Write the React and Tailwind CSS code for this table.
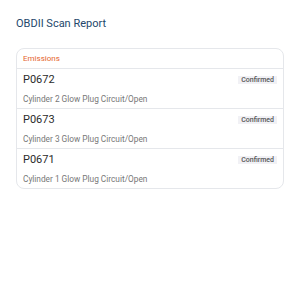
import React from 'react';

const codes = [
  { code: 'P0672', desc: 'Cylinder 2 Glow Plug Circuit/Open' },
  { code: 'P0673', desc: 'Cylinder 3 Glow Plug Circuit/Open' },
  { code: 'P0671', desc: 'Cylinder 1 Glow Plug Circuit/Open' },
];

const App = () => {
  return (
    <div className="w-[300px] h-[300px] bg-white px-4 pt-4" style={{ fontFamily: 'Roboto, sans-serif' }}>
      <h1 className="text-[11px] leading-[16px] text-[#24476b]">OBDII Scan Report</h1>

      <div className="mt-4 w-[268px] rounded-lg border border-gray-200">
        {/* Section header */}
        <div className="px-[6px] h-[20px] flex items-center border-b border-gray-200">
          <span className="text-[8px] leading-[10px] text-[#e5642c]">Emissions</span>
        </div>

        {codes.map((item, i) => (
          <div
            key={item.code}
            className={`px-[6px] pt-[4px] ${i < codes.length - 1 ? 'h-[40px] border-b border-gray-200' : 'h-[39px]'}`}
          >
            <div className="flex items-center justify-between h-[14px]">
              <span className="text-[11px] leading-[14px] text-[#2b2b2b]">{item.code}</span>
              <span className="text-[7px] leading-[8px] font-medium px-[3px] bg-[#f1f1f5] text-[#555]">Confirmed</span>
            </div>
            <p className="text-[8.3px] leading-[12px] text-[#777] mt-[6px]">{item.desc}</p>
          </div>
        ))}
      </div>
    </div>
  );
};

export default App;
